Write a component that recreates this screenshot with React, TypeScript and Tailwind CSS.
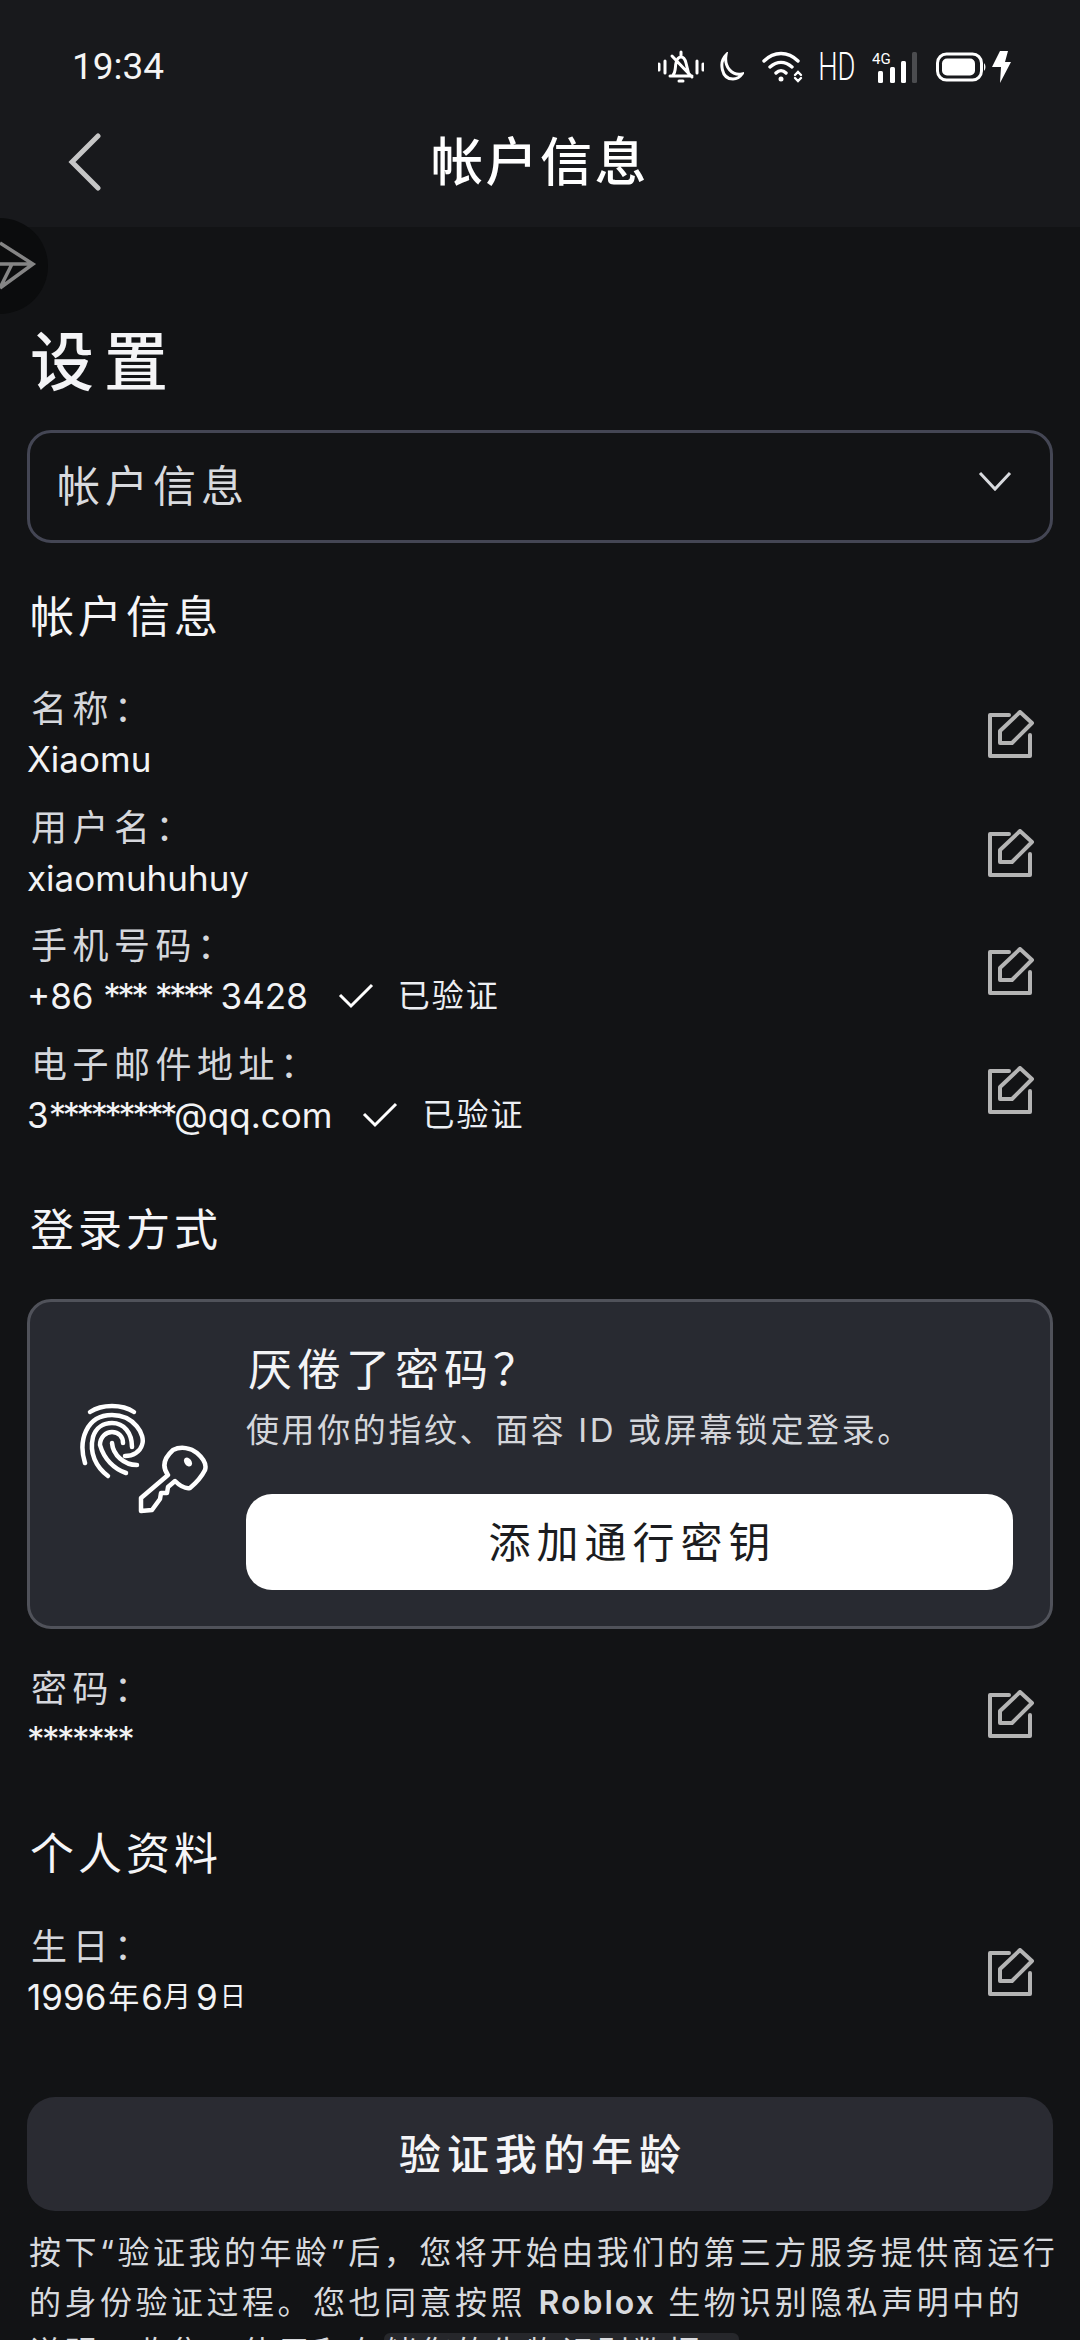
import type { ReactNode } from "react";

const cjk = "font-['Inter','Noto_Sans_CJK_SC',sans-serif]";

function EditIcon() {
  return (
    <svg width="48" height="48" viewBox="0 0 48 48" fill="none" stroke="#b4b4b4" strokeWidth="4" strokeLinejoin="round" strokeLinecap="round">
      <path d="M22 5H3v41h40V25" />
      <path d="M33 2 45 13 25 33H13V21Z" />
    </svg>
  );
}

function Check() {
  return (
    <svg width="36" height="26" viewBox="0 0 36 26" fill="none" stroke="#ffffff" strokeWidth="3">
      <path d="M2 12 13 23 34 2" />
    </svg>
  );
}

function Stars({ n }: { n: string }) {
  return <span className="tracking-[-3.600px]">{n}</span>;
}

function Verified() {
  return (
    <span className="ml-[30px] flex items-center">
      <Check />
      <span className="ml-[24px] text-[32px] tracking-[2px] text-[#eceef2]">已验证</span>
    </span>
  );
}

function Row({ label, value, verified }: { label: string; value: ReactNode; verified?: boolean }) {
  return (
    <div className="flex h-[118.5px] items-center justify-between pr-[18px]">
      <div className="flex flex-col">
        <div className="h-[50px] pl-[4px] text-[36px] leading-[50px] tracking-[5.500px] text-[#d5d7dc]">{label}</div>
        <div className="flex h-[50px] items-center text-[35px] text-[#f2f3f5]">
          {value}
          {verified && <Verified />}
        </div>
      </div>
      <EditIcon />
    </div>
  );
}

function Heading({ children }: { children: string }) {
  return <h2 className="pl-[3px] text-[44px] leading-[60px] tracking-[4px] text-[#f5f5f7]">{children}</h2>;
}

function StatusIcons() {
  return (
    <div className="flex items-center">
      <svg width="46" height="34" viewBox="0 0 46 34" fill="none" stroke="#fff" strokeWidth="3" strokeLinecap="round" className="mr-[12px]">
        <path d="M1 14v6M7 11v12M39 11v12M45 14v6" />
        <path d="M12 26h22M15 25c3-3 2-8 3-12 1-4 3-6 5-6s4 2 5 6l3 12M23 2v4M21 31h4M14 6l20 21" />
      </svg>
      <svg width="28" height="30" viewBox="0 0 28 30" fill="none" stroke="#fff" strokeWidth="3" className="mr-[18px]">
        <path d="M10 3C3 10 5 27 17 27c4 0 7-2 9-5C16 24 8 15 10 3Z" />
      </svg>
      <svg width="42" height="32" viewBox="0 0 42 32" fill="none" stroke="#fff" strokeWidth="3.4" strokeLinecap="round" className="mr-[15px]">
        <path d="M2 10c10-10 24-10 34 0M8 16c7-6 15-6 22 0M14 22c3-3 7-3 10 0" />
        <circle cx="19" cy="28" r="2.5" fill="#fff" stroke="none" />
        <path d="M33 24l3-3 3 3M33 27l3 3 3-3" strokeWidth="2.4" />
      </svg>
      <span className="mr-[18px] flex w-[35px] justify-center font-['Roboto',sans-serif] text-[38px] leading-none font-light text-white">
        <span className="scale-x-[0.72]">HD</span>
      </span>
      <svg width="46" height="32" viewBox="0 0 46 32" className="mr-[18px]">
        <text x="0" y="13" fill="#fff" fontSize="15" fontFamily="Roboto, sans-serif">4G</text>
        <rect x="6" y="20" width="5" height="12" rx="1.5" fill="#fff" />
        <rect x="18" y="16" width="5" height="16" rx="1.5" fill="#fff" />
        <rect x="29" y="10" width="5" height="22" rx="1.5" fill="#fff" />
        <rect x="40" y="1" width="5" height="31" rx="1.5" fill="#4b4c4f" />
      </svg>
      <svg width="50" height="30" viewBox="0 0 50 30" className="mr-[5px]">
        <rect x="1.5" y="2" width="44" height="26" rx="9" fill="none" stroke="#fff" strokeWidth="3" />
        <rect x="6" y="6.500" width="33" height="17" rx="5" fill="#fff" />
        <path d="M48 11c2 2 2 6 0 8z" fill="#fff" />
      </svg>
      <svg width="20" height="32" viewBox="0 0 20 32">
        <path d="M9 0h8l-3 11h6L9 32l1-16H1Z" fill="#fff" />
      </svg>
    </div>
  );
}

function PasskeyIcon() {
  return (
    <svg width="130" height="112" viewBox="0 0 130 112" fill="none" stroke="#fff" strokeWidth="4.500" strokeLinecap="round" strokeLinejoin="round">
      <path d="M10 9C22 1 42 1 54 9" />
      <path d="M5 60C-2 38 6 12 32 12c22 0 34 20 30 30-2 7-9 11-17 11" />
      <path d="M28 73C16 64 9 50 13 34c3-10 11-14 19-14 12 0 20 10 20 24" />
      <path d="M46 70C34 66 24 56 20 42c0-8 6-13 12-13 7 0 11 5 11 11" />
      <path d="M32 40c1 12 12 22 25 22" />
      <path d="M61 108V95L88 72c-6-8-5-16 5-25 8-4 18-2 24 3 7 6 10 11 8 17-3 6-9 13-15 18-5 1-10-2-15-7l-7 6-1 6h-6l-1 6-8 11Z" />
      <ellipse cx="108" cy="59" rx="3.500" ry="5" fill="#fff" stroke="none" transform="rotate(-35 108 59)" />
    </svg>
  );
}

export default function App() {
  return (
    <div className={`h-[2340px] w-[1080px] overflow-hidden bg-[#121315] text-white ${cjk}`}>
      <header className="h-[227px] bg-[#18191c]">
        <div className="flex h-[132px] items-center justify-between pr-[69px] pl-[72px] pt-[2px]">
          <span className="font-['Roboto',sans-serif] text-[37px] text-[#f5f5f5]">19:34</span>
          <StatusIcons />
        </div>
        <div className="relative flex h-[60px] items-center justify-center">
          <svg width="36" height="58" viewBox="0 0 36 58" fill="none" stroke="#c6c6c6" strokeWidth="5" strokeLinecap="round" className="absolute left-[67px]">
            <path d="M31 3 5 29l26 26" />
          </svg>
          <h1 className="mt-[2px] text-[52px] font-medium leading-none tracking-[2.500px] text-white">帐户信息</h1>
        </div>
      </header>

      <div className="absolute top-[218px] -left-[48px] flex h-[96px] w-[96px] items-center justify-center rounded-full bg-[#0b0c0d]">
        <svg width="96" height="96" viewBox="0 0 96 96" fill="none" stroke="#858585" strokeWidth="3.500">
          <path d="M48 25 81 46 48 70M48 46H81M60 46 48 70" />
        </svg>
      </div>

      <main className="px-[27px]">
        <div className="pt-[100px] pl-[3px] text-[64px] font-medium leading-[70px] tracking-[10px] text-[#f4f4f6]">设置</div>
        <div className="mt-[33px] flex h-[113px] items-center justify-between rounded-[24px] border-[3px] border-[#444654] pr-[38px] pl-[27px]">
          <span className="text-[43px] tracking-[5px] text-[#d8dade]">帐户信息</span>
          <svg width="34" height="22" viewBox="0 0 34 22" fill="none" stroke="#d8dade" strokeWidth="3" className="-mt-[12px]">
            <path d="M2 3l15 16L32 3" />
          </svg>
        </div>

        <div className="mt-[44px]">
          <Heading>帐户信息</Heading>
        </div>
        <div className="mt-[28px]">
          <Row label="名称：" value="Xiaomu" />
          <Row label="用户名：" value="xiaomuhuhuy" />
          <Row label="手机号码：" value={<span>+86 <Stars n="***" /> <Stars n="****" /> 3428</span>} verified />
          <Row label="电子邮件地址：" value={<span>3<Stars n="*********" />@qq.com</span>} verified />
        </div>

        <div className="mt-[51px]">
          <Heading>登录方式</Heading>
        </div>
        <section className="mt-[39px] flex h-[330px] rounded-[24px] border-[3px] border-[#50525a] bg-[#282a31] pt-[40px] pr-[37px] pl-[50px]">
          <div className="w-[166px] pt-[61px]">
            <PasskeyIcon />
          </div>
          <div className="flex-1">
            <div className="pl-[2px] text-[44px] leading-[56px] tracking-[5px] text-[#f3f4f6]">厌倦了密码？</div>
            <div className="mt-[9px] text-[33px] leading-[46px] tracking-[2.600px] text-[#d4d6db]">使用你的指纹、面容 ID 或屏幕锁定登录。</div>
            <button className="mt-[41px] h-[96px] w-full rounded-[26px] bg-white pl-[6px] text-[42px] tracking-[6px] text-[#1b1c20]">添加通行密钥</button>
          </div>
        </section>

        <div className="mt-[26px]">
          <Row label="密码：" value={<span className="tracking-[-2.500px]">*******</span>} />
        </div>

        <div className="mt-[50px]">
          <Heading>个人资料</Heading>
        </div>
        <div className="mt-[29px]">
          <Row
            label="生日："
            value={
              <span className="flex items-center">
                1996<span className="mx-[2px] text-[31px]">年</span>6<span className="mr-[5px] text-[28px]">月</span>9<span className="ml-[2px] text-[26px]">日</span>
              </span>
            }
          />
        </div>

        <button className="mt-[66px] h-[114px] w-full rounded-[28px] bg-[#2a2b32] pl-[6px] text-[42px] font-medium tracking-[6px] text-[#f4f4f6]">验证我的年龄</button>
        <p className="mt-[17px] w-[1040px] pl-[2px] text-[32px] leading-[50px] tracking-[3.500px] text-[#d8dade]">
          按下“验证我的年龄”后，您将开始由我们的第三方服务提供商运行的身份验证过程。您也同意按照 <b className="font-semibold tracking-[2px]">Roblox</b> 生物识别隐私声明中的
          <br />
          <span>说明，收集、使用和存</span>
          <span className="rounded-t-[6px] bg-[#26272b]">储您的生物识别数据。</span>
        </p>
      </main>
    </div>
  );
}
